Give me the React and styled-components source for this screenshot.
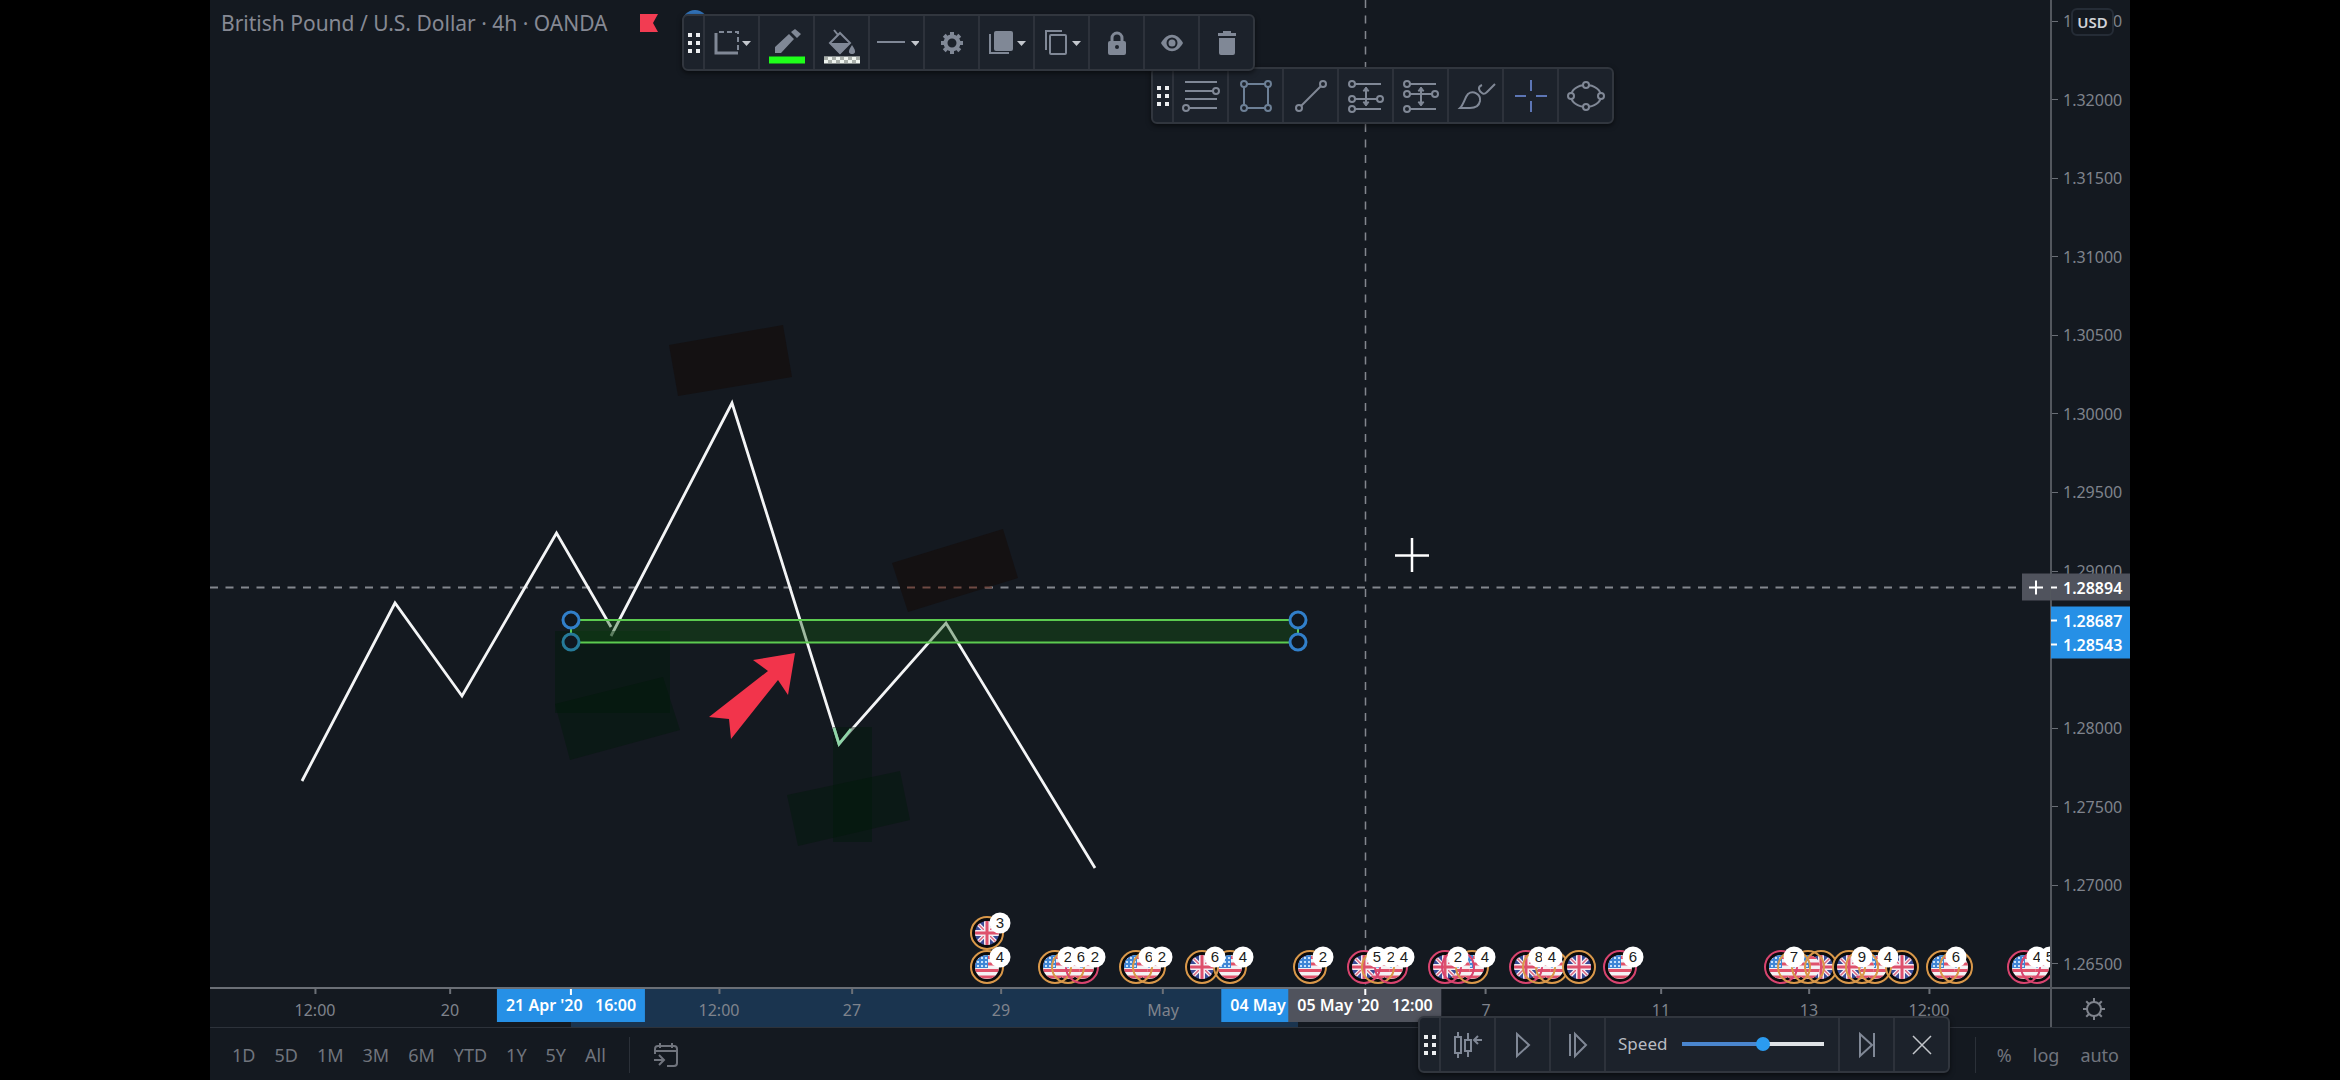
import React from "react";
import styled, { createGlobalStyle } from "styled-components";

const GlobalStyle = createGlobalStyle`
  * { box-sizing: border-box; }
  body { margin: 0; background: #000; }
  button, input { font: inherit; color: inherit; }
`;

const Page = styled.div`
  display: flex;
  justify-content: center;
  min-height: 100vh;
  background: #000;
  font-family: "Noto Sans", "Open Sans", sans-serif;
  font-size: 16px;
  color: #7f838c;
`;

const Frame = styled.main`
  position: relative;
  display: grid;
  grid-template-columns: minmax(0, 1fr) 80px;
  grid-template-rows: minmax(0, 1fr) 40px 53px;
  width: min(100vw, calc(100vh * 16 / 9));
  height: 100vh;
  overflow: hidden;
  background: #141920;
`;

const ChartArea = styled.section`
  position: relative;
  overflow: hidden;
`;

const ChartCanvas = styled.svg`
  display: block;
  width: 100%;
  height: 100%;
`;

const Legend = styled.header`
  position: absolute;
  top: 9px;
  left: 11px;
  display: flex;
  align-items: center;
  gap: 32px;
`;

const LegendMarks = styled.div`
  display: flex;
  align-items: center;
  gap: 24px;
`;

const SymbolTitle = styled.h1`
  margin: 0;
  font-size: 21px;
  line-height: 28px;
  font-weight: 400;
  color: #868994;
  white-space: pre;
`;

const PriceAxis = styled.aside`
  position: relative;
  border-left: 2px solid #53575e;
`;

const PriceList = styled.ol`
  display: flex;
  flex-direction: column;
  justify-content: space-between;
  height: 100%;
  margin: 0;
  padding: 9px 0 11px;
  list-style: none;
`;

const PriceLabel = styled.li`
  display: flex;
  align-items: center;
  gap: 5px;
  line-height: 24px;

  &::before {
    content: "";
    width: 6px;
    height: 1px;
    background: #6a6e76;
  }
`;

const PriceTag = styled.div`
  position: absolute;
  left: -1px;
  right: 0;
  display: flex;
  align-items: center;
  gap: 6px;
  height: 27px;
  transform: translateY(-50%);
  font-weight: 600;
  color: #fff;
  background: ${(p) => (p.$tone === "blue" ? "#2690e6" : "#50535d")};

  &::before {
    content: "";
    width: 6px;
    height: 2px;
    background: #fff;
  }
`;

const AddButton = styled.button`
  position: absolute;
  right: 0;
  width: 28px;
  height: 27px;
  display: grid;
  place-items: center;
  padding: 0;
  border: 0;
  color: #fff;
  background: #50535d;
  transform: translateY(-50%);
`;

const CurrencyButton = styled.button`
  position: absolute;
  top: 8px;
  left: 19px;
  width: 43px;
  height: 28px;
  padding: 0;
  border: 2px solid #252c36;
  border-radius: 6px;
  background: #141920;
  font-size: 15px;
  font-weight: 600;
  color: #d0d2d7;
`;

const TimeAxis = styled.div`
  position: relative;
  display: flex;
  border-top: 2px solid #6b6f76;
  overflow: hidden;
`;

const RangeBand = styled.div`
  position: absolute;
  top: 0;
  bottom: 0;
  background: #1a344f;
`;

const TimeSegment = styled.div`
  position: relative;
  flex: ${(p) => p.$span} 1 0;
  min-width: 0;
  display: flex;
  justify-content: flex-end;
  line-height: 28px;
`;

const TimeLabel = styled.span`
  display: flex;
  flex-direction: column;
  align-items: center;
  flex: none;
  transform: translateX(50%);

  &::before {
    content: "";
    width: 2px;
    height: 5px;
    margin-bottom: 2px;
    background: #6b6f76;
  }
`;

const TimeTag = styled.div`
  position: absolute;
  top: 0;
  height: 33px;
  padding: 0 9px;
  transform: translateX(-50%);
  white-space: pre;
  line-height: 33px;
  font-size: 16px;
  font-weight: 600;
  color: #fff;
  background: ${(p) => (p.$tone === "blue" ? "#2690e6" : "#50535d")};

  &::before {
    content: "";
    position: absolute;
    top: 0;
    left: calc(50% - 1px);
    width: 2px;
    height: 6px;
    background: #fff;
  }
`;

const AxisCorner = styled.div`
  display: flex;
  border-top: 2px solid #53575e;
  border-left: 2px solid #53575e;
`;

const CornerButton = styled.button`
  flex: 1;
  display: grid;
  place-items: center;
  padding: 2px 0 0 6px;
  border: 0;
  background: none;
`;

const Footer = styled.footer`
  grid-column: 1 / -1;
  display: flex;
  align-items: center;
  justify-content: space-between;
  padding: 1px 11px 0 22px;
  border-top: 1px solid #2d323a;
`;

const FooterGroup = styled.div`
  display: flex;
  align-items: center;
  gap: ${(p) => p.$gap}px;
`;

const TextButton = styled.button`
  padding: 0;
  border: 0;
  background: none;
  font-size: 18px;
  line-height: 24px;
  color: #70747d;
`;

const IconOnly = styled(TextButton)`
  display: grid;
`;

const FooterRule = styled.span`
  width: 1px;
  height: 36px;
  background: #2b3038;
`;

const Toolbar = styled.div`
  position: absolute;
  top: ${(p) => p.$top};
  bottom: ${(p) => p.$bottom};
  left: ${(p) => p.$left};
  z-index: ${(p) => p.$layer || 1};
  display: flex;
  height: 57px;
  border: 2px solid #31363e;
  border-radius: 6px;
  background: #1c222b;
  box-shadow: 0 2px 5px rgba(0, 0, 0, 0.55);
`;

const Grip = styled.span`
  display: grid;
  grid-template-columns: 4px 4px;
  gap: 4px;
  place-content: center;
  width: 19px;

  i { height: 4px; background: #eceef0; }
`;

const ToolButton = styled.button`
  display: grid;
  place-items: center;
  width: 55px;
  padding: 0;
  border: 0;
  border-left: 2px solid #2d323b;
  background: none;
  color: ${(p) => p.$color || "#808896"};
`;

const SpeedField = styled.label`
  display: flex;
  align-items: center;
  justify-content: space-between;
  width: 234px;
  padding: 0 14px 2px 12px;
  border-left: 2px solid #2d323b;
  font-size: 17px;
  color: #b9bcc2;
`;

const SpeedSlider = styled.input`
  width: 142px;
  height: 16px;
  margin: 0;
  appearance: none;
  background: none;

  &::-webkit-slider-runnable-track {
    height: 4px;
    background: linear-gradient(90deg, #4a86cf 58%, #dfe3e6 58%);
  }
  &::-webkit-slider-thumb {
    appearance: none;
    width: 14px;
    height: 14px;
    margin-top: -5px;
    border-radius: 50%;
    background: #2b9bf0;
  }
`;

const FIRST_X = 210;
const PLOT_WIDTH = 1840;
const PLOT_HEIGHT = 987;
const atX = (x) => `${((x - FIRST_X) / PLOT_WIDTH) * 100}%`;
const atY = (y) => `${(y / PLOT_HEIGHT) * 100}%`;

const prices = Array.from({ length: 13 }, (_, i) => (1.325 - i * 0.005).toFixed(5));

const times = [
  { label: "12:00", span: 105 },
  { label: "20", span: 135 },
  { label: "12:00", span: 269 },
  { label: "27", span: 133 },
  { label: "29", span: 149 },
  { label: "May", span: 162 },
  { label: "7", span: 323 },
  { label: "11", span: 175 },
  { label: "13", span: 148 },
  { label: "12:00", span: 120 },
];

const O = "#d9984a";
const R = "#d8446f";

/* Each cluster: [x, flag, ring colour, event count] */
const clusters = [
  { y: 933, items: [[987, "uk", O, 3]] },
  { y: 967, items: [[987, "us", O, 4]] },
  { y: 967, items: [[1055, "us", O, 2], [1068, "us", O, 6], [1082, "us", R, 2]] },
  { y: 967, items: [[1136, "us", O, 6], [1149, "us", O, 2]] },
  { y: 967, items: [[1202, "uk", O, 6], [1230, "us", O, 4]] },
  { y: 967, items: [[1310, "us", O, 2]] },
  { y: 967, items: [[1364, "uk", R, 5], [1378, "us", O, 2], [1391, "us", R, 4]] },
  { y: 967, items: [[1445, "uk", R, 2], [1458, "us", R], [1472, "us", O, 4]] },
  { y: 967, items: [[1526, "uk", R, 8], [1539, "us", O, 4], [1552, "us", O]] },
  { y: 967, items: [[1579, "uk", O]] },
  { y: 967, items: [[1620, "us", R, 6]] },
  { y: 967, items: [[1781, "us", R, 7], [1794, "us", O], [1808, "us", O], [1821, "uk", O]] },
  { y: 967, items: [[1849, "uk", O, 9], [1862, "us", O], [1875, "us", O, 4], [1902, "uk", O]] },
  { y: 967, items: [[1943, "us", O, 6], [1956, "us", O]] },
  { y: 967, items: [[2024, "us", R, 4], [2037, "us", R, 5]] },
];

function FlagDefs() {
  return (
    <defs>
      <clipPath id="disc"><circle r="12" /></clipPath>
      <g id="us" clipPath="url(#disc)">
        <rect x="-12" y="-12" width="24" height="24" fill="#f4f1f4" />
        <path d="M-12 -9.500h24M-12 -3h24M-12 3.500h24M-12 10h24" stroke="#e0526b" strokeWidth="3" />
        <rect x="-12" y="-12" width="13" height="13" fill="#3f86d6" />
        <path d="M-10 -9H1M-10 -5H1M-10 -1H1" stroke="#c9e2fa" strokeWidth="2" strokeDasharray="2 2" />
      </g>
      <g id="uk" clipPath="url(#disc)">
        <rect x="-12" y="-12" width="24" height="24" fill="#3a4b96" />
        <path d="M-12 -12L12 12M-12 12L12 -12" stroke="#f3edf3" strokeWidth="4" />
        <path d="M-12 -12L12 12M-12 12L12 -12" stroke="#de6680" strokeWidth="1.4" />
        <path d="M0 -12V12M-12 0H12" stroke="#f3edf3" strokeWidth="6" />
        <path d="M0 -12V12M-12 0H12" stroke="#de506c" strokeWidth="3" />
      </g>
    </defs>
  );
}

function EventCluster({ y, items }) {
  return (
    <g transform={`translate(0 ${y})`}>
      {items.map(([x]) => <circle key={x} cx={x} r="16" fill="#0b0b0d" />)}
      {[...items].reverse().map(([x, flag]) => (
        <use key={x} href={`#${flag}`} transform={`translate(${x} 0)`} />
      ))}
      {items.map(([x, , ring]) => (
        <circle key={x} cx={x} r="16" fill="none" stroke={ring} strokeWidth="2" />
      ))}
      {items.filter((item) => item[3]).map(([x, , , count]) => (
        <g key={x} transform={`translate(${x + 13} -10)`}>
          <circle r="10.500" fill="#fff" />
          <text y="5" textAnchor="middle" fontFamily="Liberation Sans, sans-serif" fontSize="15" fill="#1a1c20">{count}</text>
        </g>
      ))}
    </g>
  );
}

function Chart() {
  return (
    <ChartCanvas viewBox={`${FIRST_X} 0 ${PLOT_WIDTH} ${PLOT_HEIGHT}`} preserveAspectRatio="none" role="img" aria-label="GBPUSD price chart">
      <FlagDefs />
      <g stroke="#83878e" strokeWidth="2" strokeDasharray="8 7.5">
        <path d="M210 587.500H2022" />
        <path d="M1365.500 0V987" strokeWidth="1.5" />
      </g>
      <g fill="none" stroke="#f4f5f6" strokeWidth="2.800">
        <path d="M302 781L395 603L462 696L556.500 533L611 627" />
        <path d="M611 636L732 403L839 744L946 623L1095 868" />
      </g>
      <g fill="#141112">
        <path d="M669 345L783 325L792 377L678 396Z" />
        <path d="M892 563L1003 529L1018 578L908 612Z" />
      </g>
      <path d="M907 587.500h85" stroke="#6f4a43" strokeWidth="2" strokeDasharray="8 7.5" />
      <g fill="#00180a" fillOpacity="0.44">
        <path d="M555 631h115v82H555Z" />
        <path d="M555 704L663 677L680 730L570 760Z" />
        <path d="M833 727h39v115h-39Z" />
        <path d="M787 795L900 771L910 820L798 846Z" />
      </g>
      <path d="M834 728L839 744L851 729" fill="none" stroke="#8fd6a8" strokeWidth="2.800" />
      <rect x="571" y="620" width="727" height="22.500" fill="#145a14" fillOpacity="0.38" stroke="#5ccb50" strokeWidth="2" />
      {[[571, 620], [571, 642], [1298, 620], [1298, 642]].map(([x, y]) => (
        <circle key={`${x}-${y}`} cx={x} cy={y} r="8" fill="#10171f" stroke={x === 571 && y === 642 ? "#267a99" : "#317fca"} strokeWidth="3" />
      ))}
      <path d="M795 653L753 660L768 671L709 717L729 719L731 739L778 680L788 695Z" fill="#f2344b" />
      <path d="M1412 538V572M1395 555.500H1429" stroke="#fff" strokeWidth="2.500" />
      {clusters.map((c) => <EventCluster key={`${c.y}-${c.items[0][0]}`} {...c} />)}
    </ChartCanvas>
  );
}

const Icon = ({ size = 44, children, ...rest }) => (
  <svg width={size} height={size} viewBox={`${-size / 2} ${-size / 2} ${size} ${size}`} fill="none" stroke="currentColor" strokeWidth="2" aria-hidden="true" {...rest}>
    {children}
  </svg>
);

const Caret = ({ x = 10 }) => <path d={`M${x} -2h9l-4.500 5z`} fill="#c3c7cd" stroke="none" />;
const Dot = ({ x, y }) => <circle cx={x} cy={y} r="3" fill="#1c222b" />;
const teeth = [0, 45, 90, 135, 180, 225, 270, 315];

const editTools = [
  ["Template", <><path d="M-16 -10V10H6" strokeWidth="3" /><path d="M-13 -11H6V8" strokeDasharray="5 3" /><Caret /></>],
  ["Line colour", <><path d="M-12 10V4L2 -9L7 -4L-6 10ZM4 -11L8 -14L14 -9L10 -5Z" fill="currentColor" stroke="none" /><path d="M-18 17H18" stroke="#1fff1a" strokeWidth="7" /></>],
  ["Fill colour", <><path d="M-8 -13L-4 -8M-12 0L-2 -10L8 0L-2 10Z" /><path d="M-12 0H8L-2 11Z" fill="currentColor" stroke="none" /><path d="M10 2C15 9 13 11 10 11S5 9 10 2Z" fill="currentColor" stroke="none" /><path d="M-18 17H18" stroke="#eef3ee" strokeWidth="7" /><path d="M-18 15.500H18" stroke="#a9afaa" strokeWidth="3" strokeDasharray="4 4" /><path d="M-14 18.500H18" stroke="#a9afaa" strokeWidth="3" strokeDasharray="4 4" /></>],
  ["Line style", <><path d="M-20 -1H8" /><Caret x={14} /></>],
  ["Settings", <><circle r="6.500" strokeWidth="4" />{teeth.map((a) => <path key={a} d="M0 -7V-11" strokeWidth="4" transform={`rotate(${a})`} />)}</>],
  ["Visual order", <><rect x="-13" y="-12" width="19" height="20" rx="2" fill="currentColor" stroke="none" /><path d="M-17 -9V10H2" /><Caret /></>],
  ["Clone", <><rect x="-12" y="-8" width="16" height="19" rx="1" /><path d="M-16 7V-12H0" /><Caret /></>],
  ["Lock", <><path d="M-5 -1V-5A5 5 0 0 1 5 -5V-1" strokeWidth="3" /><rect x="-9" y="-2" width="18" height="14" rx="2" fill="currentColor" stroke="none" /><circle cy="4" r="2" fill="#1c222b" stroke="none" /></>],
  ["Hide", <><path d="M-11 0C-5 -11 5 -11 11 0C5 11 -5 11 -11 0Z" fill="currentColor" stroke="none" /><circle r="4.500" stroke="#1c222b" /></>],
  ["Remove", <path d="M-9 -10H-4V-12H4V-10H9V-7H-9ZM-8 -5H8V10Q8 12 6 12H-6Q-8 12 -8 10Z" fill="currentColor" stroke="none" />],
];

const drawTools = [
  ["Fib retracement", <><path d="M-16 -14H16M-16 -5H12M-16 3H16M-12 12H16" /><Dot x={15} y={-5} /><Dot x={-15} y={12} /></>],
  ["Rectangle", <><rect x="-12" y="-12" width="24" height="24" /><Dot x={-12} y={-12} /><Dot x={12} y={-12} /><Dot x={-12} y={12} /><Dot x={12} y={12} /></>, "#6d8096"],
  ["Trend line", <><path d="M-12 12L12 -12" /><Dot x={-12} y={12} /><Dot x={12} y={-12} /></>],
  ["Long position", <><path d="M-12 -12H15M-12 3H12M-12 13H15M0 -8V8" /><path d="M-3 -5L0 -9L3 -5ZM-3 6L0 10L3 6Z" fill="currentColor" strokeWidth="1" /><Dot x={-14} y={-12} /><Dot x={-14} y={3} /><Dot x={14} y={3} /><Dot x={-14} y={13} /></>],
  ["Short position", <><path d="M-12 -12H15M-12 -2H12M-12 13H15M0 -8V9" /><path d="M-3 -5L0 -9L3 -5ZM-3 6L0 10L3 6Z" fill="currentColor" strokeWidth="1" /><Dot x={-14} y={-12} /><Dot x={-14} y={-2} /><Dot x={14} y={-2} /><Dot x={-14} y={13} /></>],
  ["Brush", <path d="M-16 12C-12 8 -11 1 -8 -2C-3 -6 5 -2 4 5C3 10 -1 12 -6 12ZM6 -11C1 -9 3 -5 6 -3C8 -1 10 -3 11 -4L19 -12" />],
  ["Cross", <path d="M0 -16V-5M0 5V16M-16 0H-5M5 0H16" />, "#5d76b5"],
  ["Ellipse", <><ellipse rx="15" ry="11" /><Dot x={-15} y={0} /><Dot x={15} y={0} /><Dot x={0} y={-11} /><Dot x={0} y={11} /></>],
];

const GripDots = () => <Grip>{[1, 2, 3, 4, 5, 6].map((n) => <i key={n} />)}</Grip>;

const Tool = ({ tool: [name, art, color] }) => (
  <ToolButton type="button" aria-label={name} $color={color}><Icon>{art}</Icon></ToolButton>
);

const replayStart = [
  ["Jump to bar", <path d="M-13 -8H-7V8H-13ZM-10 -13V-8M-10 8V13M-3 -5H3V6H-3ZM0 -12V-5M0 6V12M6 -5H14M10 -9L6 -5L10 -1" />],
  ["Play", <path d="M-6 -11L6 0L-6 11Z" />],
  ["Forward", <path d="M-8 -11V11M-3 -11L8 0L-3 11Z" />],
];

const replayEnd = [
  ["Go to realtime", <path d="M-7 -11L5 0L-7 11ZM7 -12V12" />],
  ["Close", <path d="M-9 -9L9 9M-9 9L9 -9" strokeWidth="1.500" />, "#c3c6cb"],
];

export default function App() {
  return (
    <Page>
      <GlobalStyle />
      <Frame>
        <ChartArea>
          <Chart />
          <Legend>
            <SymbolTitle>British Pound / U.S. Dollar · 4h · OANDA</SymbolTitle>
            <LegendMarks>
              <svg width="18" height="18" viewBox="0 0 18 18" aria-hidden="true">
                <path d="M0 0H18L13 9L18 18H0Z" fill="#f23c52" />
              </svg>
              <svg width="26" height="26" viewBox="0 0 26 26" aria-hidden="true">
                <circle cx="13" cy="13" r="13" fill="#3272b8" />
              </svg>
            </LegendMarks>
          </Legend>
          <AddButton type="button" aria-label="Add alert at price" style={{ top: atY(587) }}>
            <Icon size={16}><path d="M0 -7V7M-7 0H7" /></Icon>
          </AddButton>
        </ChartArea>

        <PriceAxis>
          <PriceList>{prices.map((p) => <PriceLabel key={p}>{p}</PriceLabel>)}</PriceList>
          <PriceTag $tone="gray" style={{ top: atY(587) }}>1.28894</PriceTag>
          <PriceTag $tone="blue" style={{ top: atY(620) }}>1.28687</PriceTag>
          <PriceTag $tone="blue" style={{ top: atY(645) }}>1.28543</PriceTag>
          <CurrencyButton type="button">USD</CurrencyButton>
        </PriceAxis>

        <TimeAxis>
          <RangeBand style={{ left: atX(571), right: `${((2050 - 1298) / PLOT_WIDTH) * 100}%` }} />
          {times.map((t, i) => (
            <TimeSegment key={i} $span={t.span}><TimeLabel>{t.label}</TimeLabel></TimeSegment>
          ))}
          <TimeSegment $span={121} />
          <TimeTag $tone="blue" style={{ left: atX(571) }}>{"21 Apr '20   16:00"}</TimeTag>
          <TimeTag $tone="blue" style={{ left: atX(1298) }}>{"04 May '20   12:00"}</TimeTag>
          <TimeTag $tone="gray" style={{ left: atX(1365) }}>{"05 May '20   12:00"}</TimeTag>
        </TimeAxis>
        <AxisCorner>
          <CornerButton type="button" aria-label="Axis settings">
            <Icon size={24}>
              <circle r="7" />
              {teeth.map((a) => <path key={a} d="M0 -7V-11" transform={`rotate(${a})`} />)}
            </Icon>
          </CornerButton>
        </AxisCorner>

        <Footer>
          <FooterGroup $gap={23}>
            <FooterGroup $gap={19}>
              {["1D", "5D", "1M", "3M", "6M", "YTD", "1Y", "5Y", "All"].map((r) => (
                <TextButton key={r} type="button">{r}</TextButton>
              ))}
            </FooterGroup>
            <FooterRule />
            <IconOnly type="button" aria-label="Go to date">
              <Icon size={26}>
                <path d="M-11 -1V-6Q-11 -9 -8 -9H8Q11 -9 11 -6V8Q11 11 8 11H1M-11 -4H11M-6 -12V-7M6 -12V-7M-12 5H-3M-7 0L-2 5L-7 10" />
              </Icon>
            </IconOnly>
          </FooterGroup>
          <FooterGroup $gap={21}>
            <FooterRule />
            <TextButton type="button">%</TextButton>
            <TextButton type="button">log</TextButton>
            <TextButton type="button">auto</TextButton>
          </FooterGroup>
        </Footer>

        <Toolbar $top="14px" $left={`${(472 / 1920) * 100}%`} $layer={2}>
          <GripDots />
          {editTools.map((t) => <Tool key={t[0]} tool={t} />)}
        </Toolbar>
        <Toolbar $top="67px" $left={`${(941 / 1920) * 100}%`}>
          <GripDots />
          {drawTools.map((t) => <Tool key={t[0]} tool={t} />)}
        </Toolbar>
        <Toolbar $bottom="7px" $left={`${(1208 / 1920) * 100}%`}>
          <GripDots />
          {replayStart.map((t) => <Tool key={t[0]} tool={t} />)}
          <SpeedField>
            Speed
            <SpeedSlider type="range" min="0" max="100" defaultValue="58" />
          </SpeedField>
          {replayEnd.map((t) => <Tool key={t[0]} tool={t} />)}
        </Toolbar>
      </Frame>
    </Page>
  );
}
